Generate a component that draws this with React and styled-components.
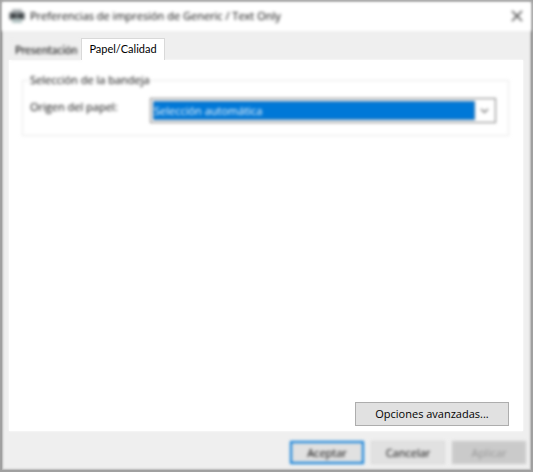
import React, { useState } from 'react';
import styled, { createGlobalStyle, css } from 'styled-components';

const App = () => {
    const [tab, setTab] = useState('papel');

    return (
        <>
            <GlobalStyle />
            <Dialog>
                <TitleBar>
                    <PrinterIcon />
                    <Title>Preferencias de impresión de Generic / Text Only</Title>
                    <CloseButton type="button" aria-label="Cerrar">
                        <svg width="12" height="12" viewBox="0 0 12 12">
                            <path d="M1 1L11 11M11 1L1 11" stroke="#333" strokeWidth="1.3" />
                        </svg>
                    </CloseButton>
                </TitleBar>
                <TabList role="tablist">
                    <Tab
                        type="button"
                        role="tab"
                        aria-selected={tab === 'presentacion'}
                        $active={tab === 'presentacion'}
                        onClick={() => setTab('presentacion')}
                    >
                        Presentación
                    </Tab>
                    <Tab
                        type="button"
                        role="tab"
                        aria-selected={tab === 'papel'}
                        $active={tab === 'papel'}
                        onClick={() => setTab('papel')}
                    >
                        Papel/Calidad
                    </Tab>
                </TabList>
                <Panel role="tabpanel">
                    {tab === 'papel' && (
                        <Group>
                            <Legend>Selección de la bandeja</Legend>
                            <Field>
                                <Label htmlFor="origen">Origen del papel:</Label>
                                <SelectFrame>
                                    <Select id="origen">
                                        <option>Selección automática</option>
                                    </Select>
                                    <Arrow />
                                </SelectFrame>
                            </Field>
                        </Group>
                    )}
                    <AdvancedButton type="button">Opciones avanzadas...</AdvancedButton>
                </Panel>
                <Footer>
                    <FooterButton type="button" $primary>
                        Aceptar
                    </FooterButton>
                    <FooterButton type="button">Cancelar</FooterButton>
                    <FooterButton type="button" disabled>
                        Aplicar
                    </FooterButton>
                </Footer>
            </Dialog>
        </>
    );
};

const PrinterIcon = () => (
    <svg width="16" height="16" viewBox="0 0 16 16" aria-hidden="true">
        <rect x="3" y="1" width="10" height="5" fill="#b9bdbf" />
        <rect x="0" y="4" width="16" height="8" rx="2" fill="#7c8285" />
        <rect x="2" y="6" width="4" height="4" fill="#35393c" />
        <rect x="10" y="6" width="4" height="4" fill="#35393c" />
        <rect x="6" y="7" width="4" height="2" fill="#4b5052" />
        <rect x="3" y="11" width="10" height="4" fill="#b5c5c4" />
    </svg>
);

const Arrow = () => (
    <ArrowBox aria-hidden="true">
        <svg width="9" height="6" viewBox="0 0 9 6">
            <path d="M1 1L4.5 4.5L8 1" fill="none" stroke="#666" strokeWidth="1.2" />
        </svg>
    </ArrowBox>
);

const GlobalStyle = createGlobalStyle`
    * {
        box-sizing: border-box;
    }

    body {
        margin: 0;
        background: #f0f0f0;
    }

    body,
    button,
    select {
        font-family: 'Open Sans', 'Noto Sans', sans-serif;
        font-size: 11px;
        line-height: 16px;
        color: #000;
    }
`;

const soft = css`
    filter: blur(1px) blur(1px);
`;

const Dialog = styled.div`
    display: flex;
    flex-direction: column;
    min-height: 100vh;
    border: 2px solid #a0a0a0;
    background: #efefef;
    box-shadow: inset 0 0 2px 1px #b4b4b4;
`;

const TitleBar = styled.header`
    display: flex;
    align-items: center;
    gap: 5px;
    height: 29px;
    padding: 0 8px 2px 7px;
    background: #fff;
    ${soft}
`;

const Title = styled.h1`
    flex: 1;
    margin: 0;
    font-size: 11px;
    font-weight: 400;
`;

const CloseButton = styled.button`
    display: flex;
    padding: 0;
    border: 0;
    background: none;
`;

const TabList = styled.div`
    display: flex;
    align-items: flex-end;
    height: 29px;
    padding: 0 9px;
`;

const Tab = styled.button`
    position: relative;
    height: 20px;
    padding: 0 4px;
    border: 0;
    background: #efefef;
    font-family: Lato, 'Open Sans', sans-serif;
    ${soft}

    ${({ $active }) =>
        $active &&
        css`
            z-index: 1;
            height: 22px;
            padding: 0 7px 2px;
            border: 1px solid #d9d9d9;
            border-bottom: 0;
            background: #fff;
            filter: none;
        `}
`;

const Panel = styled.main`
    display: flex;
    flex: 1;
    flex-direction: column;
    margin: 0 8px 0 7px;
    padding: 12px 14px 5px 13px;
    background: #fff;
    box-shadow: 0 0 2px #fff;
`;

const Group = styled.fieldset`
    min-width: 0;
    margin: 0;
    padding: 10px 12px 12px 7px;
    border: 1px solid #e8e8e8;
    ${soft}
`;

const Legend = styled.legend`
    padding: 0;
`;

const Field = styled.div`
    display: grid;
    grid-template-columns: 120px 1fr;
`;

const Label = styled.label`
    line-height: 18px;
`;

const SelectFrame = styled.div`
    display: flex;
    height: 25px;
    padding: 2px;
    border: 1px solid #777;
    background: #fff;
`;

const Select = styled.select`
    flex: 1;
    min-width: 0;
    padding: 0;
    border: 1px solid #2f6fa8;
    border-radius: 0;
    outline: 0;
    appearance: none;
    background: #0078d7;
    color: #fff;
`;

const ArrowBox = styled.span`
    display: flex;
    align-items: center;
    justify-content: center;
    width: 18px;
`;

const AdvancedButton = styled.button`
    align-self: flex-end;
    width: 154px;
    height: 24px;
    margin-top: auto;
    padding: 0;
    border: 1px solid #adadad;
    background: #e1e1e1;
`;

const Footer = styled.footer`
    display: flex;
    justify-content: flex-end;
    gap: 7px;
    padding: 10px 5px 6px;
`;

const FooterButton = styled.button`
    width: 74px;
    height: 23px;
    padding: 0;
    border: ${({ $primary }) => ($primary ? '2px solid #0078d7' : '1px solid #d5d5d5')};
    background: #e1e1e1;
    ${soft}

    &:disabled {
        border-color: #c8c8c8;
        background: #cacaca;
        color: #969696;
    }
`;

export default App;
